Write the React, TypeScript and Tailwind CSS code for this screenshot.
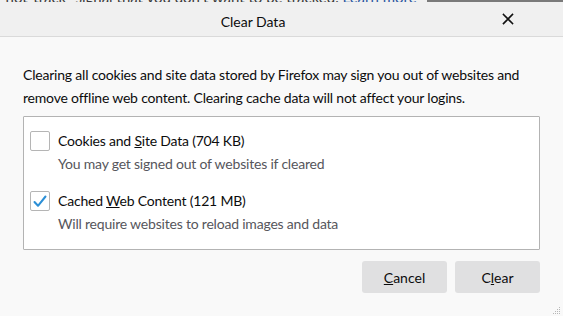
import React, { useState } from 'react';

const font = { fontFamily: 'Lato, "Noto Sans", "Liberation Sans", sans-serif' };

interface OptionProps {
  checked: boolean;
  onToggle: () => void;
  label: React.ReactNode;
  hint: string;
}

const CheckIcon = () => (
  <svg width="14" height="13" viewBox="0 0 14 13" fill="none">
    <path d="M1.5 7 L5 10.8 L12.5 1.5" stroke="#2b8fd6" strokeWidth="2" strokeLinecap="round" strokeLinejoin="round" />
  </svg>
);

const Option: React.FC<OptionProps> = ({ checked, onToggle, label, hint }) => (
  <div className="flex flex-col">
    <div className="flex items-center gap-2 h-5">
      <button
        onClick={onToggle}
        className="w-5 h-5 shrink-0 flex items-center justify-center rounded-[2px] border border-[#b5b5b5] bg-white"
      >
        {checked && <CheckIcon />}
      </button>
      <span className="text-[14px] text-[#0c0c0d] leading-5 tracking-[-0.2px]">{label}</span>
    </div>
    <span className="pl-7 mt-[3px] text-[14px] text-[#56565c] leading-5 tracking-[-0.2px]">{hint}</span>
  </div>
);

export default function App() {
  const [cookies, setCookies] = useState(false);
  const [cache, setCache] = useState(true);

  return (
    <div className="w-[563px] h-[316px] flex flex-col bg-[#f9f9f9] overflow-hidden" style={font}>
      {/* page behind the dialog */}
      <div className="h-[2px] shrink-0 flex overflow-hidden bg-[#f0f0f0]">
        <div className="flex-1 relative overflow-hidden">
          <span className="absolute left-0 -top-[13px] text-[15px] leading-5 whitespace-nowrap text-[#3a3a3a]">
            -not-track” signal that you don’t want to be tracked. <span className="text-[#2a55a0]">Learn more</span>
          </span>
        </div>
        <div className="w-[136px] bg-[#7a7a7a]" />
      </div>

      {/* title bar */}
      <div className="h-[35px] shrink-0 flex items-center bg-[#f0f0f0] border-b border-[#dadada]">
        <div className="flex-1 text-center text-[14px] text-[#0c0c0d] pt-[4px] pl-[4px]">Clear Data</div>
        <button className="mr-[49px] w-3 h-3 flex items-center justify-center">
          <svg width="12" height="12" viewBox="0 0 12 12">
            <path d="M1.5 1.5 L10.5 10.5 M10.5 1.5 L1.5 10.5" stroke="#111" strokeWidth="1.6" strokeLinecap="square" />
          </svg>
        </button>
      </div>

      {/* body */}
      <div className="flex-1 flex flex-col px-[23px] pt-[26px]">
        <p className="text-[14px] leading-[23px] text-[#0c0c0d] tracking-[-0.2px]">
          Clearing all cookies and site data stored by Firefox may sign you out of websites and remove offline web
          content. Clearing cache data will not affect your logins.
        </p>

        <div className="mt-[7px] h-[134px] shrink-0 bg-white border border-[#b3b3b3] rounded-[1px] pl-[6px] pt-[14px] flex flex-col gap-[17px]">
          <Option
            checked={cookies}
            onToggle={() => setCookies(!cookies)}
            label={<>Cookies and <u>S</u>ite Data (704 KB)</>}
            hint="You may get signed out of websites if cleared"
          />
          <Option
            checked={cache}
            onToggle={() => setCache(!cache)}
            label={<>Cached <u>W</u>eb Content (121 MB)</>}
            hint="Will require websites to reload images and data"
          />
        </div>

        <div className="mt-[11px] flex justify-end gap-2">
          <button className="w-[85px] h-8 rounded-[3px] bg-[#e0e0e1] text-[14px] text-[#0c0c0d]">
            <u>C</u>ancel
          </button>
          <button className="w-[85px] h-8 rounded-[3px] bg-[#e0e0e1] text-[14px] text-[#0c0c0d]">
            C<u>l</u>ear
          </button>
        </div>

        <div className="flex-1 flex justify-end items-end -mr-[21px] pb-[1px]">
          <svg width="9" height="9" viewBox="0 0 9 9">
            <g fill="#b8b8b8">
              <rect x="7" y="1" width="1" height="1" />
              <rect x="5" y="3" width="1" height="1" />
              <rect x="7" y="3" width="1" height="1" />
              <rect x="3" y="5" width="1" height="1" />
              <rect x="5" y="5" width="1" height="1" />
              <rect x="7" y="5" width="1" height="1" />
              <rect x="1" y="7" width="1" height="1" />
              <rect x="3" y="7" width="1" height="1" />
              <rect x="5" y="7" width="1" height="1" />
              <rect x="7" y="7" width="1" height="1" />
            </g>
          </svg>
        </div>
      </div>
    </div>
  );
}
